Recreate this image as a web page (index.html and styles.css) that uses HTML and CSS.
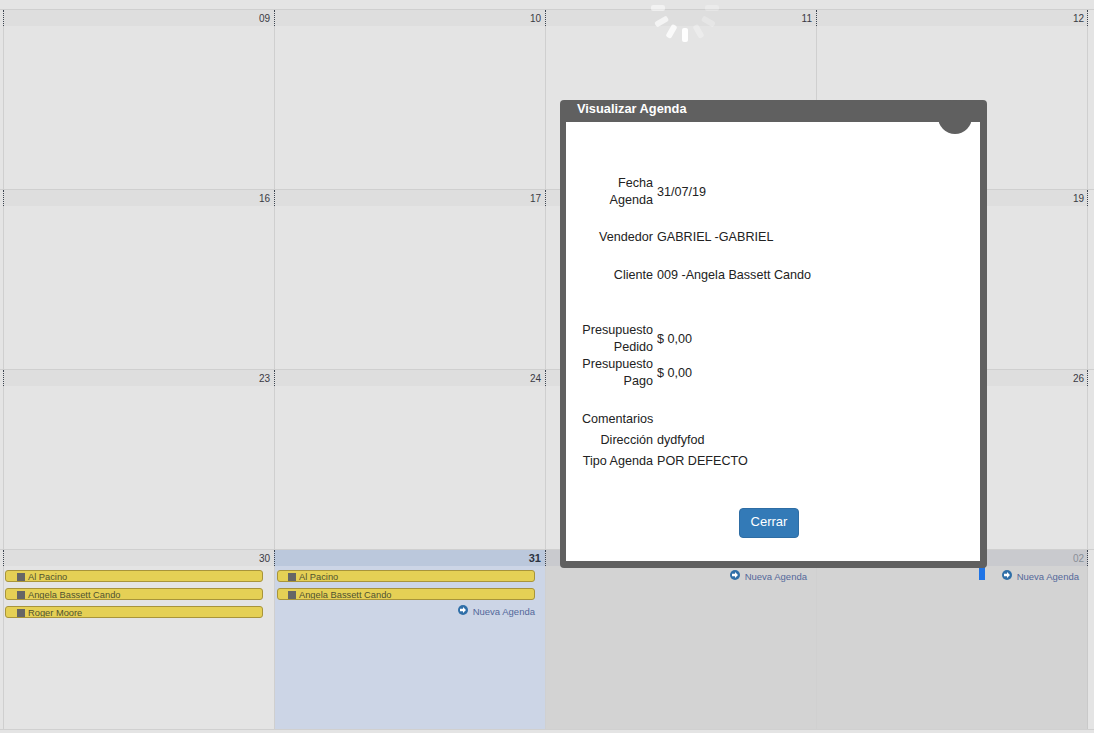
FILE: index.html
```html
<!DOCTYPE html>
<html lang="es">
<head>
<meta charset="utf-8">
<title>Visualizar Agenda</title>
<link rel="stylesheet" href="styles.css">
</head>
<body>
<main class="calendar">
  <section class="week">
    <div class="day day-first"><div class="day-head">09</div></div>
    <div class="day"><div class="day-head">10</div></div>
    <div class="day"><div class="day-head">11</div></div>
    <div class="day"><div class="day-head">12</div></div>
  </section>
  <section class="week">
    <div class="day day-first"><div class="day-head">16</div></div>
    <div class="day"><div class="day-head">17</div></div>
    <div class="day"><div class="day-head">18</div></div>
    <div class="day"><div class="day-head">19</div></div>
  </section>
  <section class="week">
    <div class="day day-first"><div class="day-head">23</div></div>
    <div class="day"><div class="day-head">24</div></div>
    <div class="day"><div class="day-head">25</div></div>
    <div class="day"><div class="day-head">26</div></div>
  </section>
  <section class="week week-last">
    <div class="day day-first">
      <div class="day-head">30</div>
      <div class="event"><span class="event-mark"></span>Al Pacino</div>
      <div class="event"><span class="event-mark"></span>Angela Bassett Cando</div>
      <div class="event"><span class="event-mark"></span>Roger Moore</div>
    </div>
    <div class="day day-today">
      <div class="day-head">31</div>
      <div class="event"><span class="event-mark"></span>Al Pacino</div>
      <div class="event"><span class="event-mark"></span>Angela Bassett Cando</div>
      <a class="new-link"><svg class="new-icon" viewBox="0 0 10 10"><circle cx="5" cy="5" r="5"/><path class="new-arrow" d="M2 3.8h3V2l3 3-3 3V6.2H2z"/></svg>Nueva Agenda</a>
    </div>
    <div class="day day-other day-c3">
      <div class="day-head">01</div>
      <a class="new-link"><svg class="new-icon" viewBox="0 0 10 10"><circle cx="5" cy="5" r="5"/><path class="new-arrow" d="M2 3.8h3V2l3 3-3 3V6.2H2z"/></svg>Nueva Agenda</a>
    </div>
    <div class="day day-other day-c4">
      <div class="day-head">02</div>
      <a class="new-link"><svg class="new-icon" viewBox="0 0 10 10"><circle cx="5" cy="5" r="5"/><path class="new-arrow" d="M2 3.8h3V2l3 3-3 3V6.2H2z"/></svg>Nueva Agenda</a>
    </div>
  </section>
</main>

<svg class="spinner" viewBox="0 0 80 80">
  <g fill="#fff">
    <rect class="s1" x="37" y="60" width="6" height="14" rx="2" transform="rotate(90 40 40)"/>
    <rect class="s2" x="37" y="60" width="6" height="14" rx="2" transform="rotate(60 40 40)"/>
    <rect class="s3" x="37" y="60" width="6" height="14" rx="2" transform="rotate(30 40 40)"/>
    <rect class="s4" x="37" y="60" width="6" height="14" rx="2"/>
    <rect class="s5" x="37" y="60" width="6" height="14" rx="2" transform="rotate(-30 40 40)"/>
    <rect class="s6" x="37" y="60" width="6" height="14" rx="2" transform="rotate(-60 40 40)"/>
    <rect class="s7" x="37" y="60" width="6" height="14" rx="2" transform="rotate(-90 40 40)"/>
  </g>
</svg>

<span class="blue-mark"></span>

<div class="modal">
  <header class="modal-head">
    <h1 class="modal-title">Visualizar Agenda</h1>
    <span class="modal-close"></span>
  </header>
  <div class="modal-body">
    <div class="field"><span class="field-label">Fecha Agenda</span><span class="field-value">31/07/19</span></div>
    <div class="field gap-20"><span class="field-label">Vendedor</span><span class="field-value">GABRIEL -GABRIEL</span></div>
    <div class="field gap-21"><span class="field-label">Cliente</span><span class="field-value">009 -Angela Bassett Cando</span></div>
    <div class="field gap-38"><span class="field-label">Presupuesto Pedido</span><span class="field-value">$ 0,00</span></div>
    <div class="field"><span class="field-label">Presupuesto Pago</span><span class="field-value">$ 0,00</span></div>
    <div class="field gap-21"><span class="field-label">Comentarios</span><span class="field-value"></span></div>
    <div class="field gap-4"><span class="field-label">Dirección</span><span class="field-value">dydfyfod</span></div>
    <div class="field gap-4"><span class="field-label">Tipo Agenda</span><span class="field-value">POR DEFECTO</span></div>
    <div class="modal-actions"><button class="btn-close" type="button">Cerrar</button></div>
  </div>
</div>
</body>
</html>
```
FILE: styles.css
```css
* { box-sizing: border-box; }

html, body {
  margin: 0;
  height: 733px;
  overflow: hidden;
}

body {
  background: #e4e4e4;
  font-family: "Liberation Sans", Arial, sans-serif;
  color: #333;
}

.calendar {
  padding-top: 9px;
}

.week {
  display: grid;
  grid-template-columns: repeat(4, 271px);
  padding-left: 3px;
  height: 180px;
  border-top: 1px solid #cfcfcf;
}

.week-last {
  height: 181px;
  border-bottom: 1px solid #d0d0d0;
}

.day {
  border-left: 1px solid #cfcfcf;
  position: relative;
  font-size: 10px;
}

.day:last-child {
  width: 272px;
  border-right: 1px solid #cfcfcf;
}

.day-head {
  height: 16px;
  margin-left: -1px;
  padding-right: 4px;
  border-left: 1px dotted #3c4450;
  background: #dedede;
  text-align: right;
  font-size: 10px;
  line-height: 17px;
  color: #3a3a44;
}

.day:last-child .day-head {
  margin-right: -1px;
  border-right: 1px dotted #3c4450;
  padding-right: 3px;
  width: 272px;
}

.day-today {
  background: #ccd5e6;
}

.day-today .day-head {
  background: #bbc8dc;
  font-weight: bold;
  font-size: 11px;
  color: #2c3340;
}

.day-other {
  background: #d3d3d3;
  border-left-color: #d0d0d0;
}

.day-other .day-head {
  background: #c9cace;
  color: #8a8f98;
}

.day-other:last-child {
  border-right-color: #c9c9c9;
}

.event {
  height: 12px;
  margin: 4px 10px 6px 2px;
  padding-left: 10px;
  border: 1px solid #a8943a;
  border-radius: 3px;
  background: #e5d055;
  color: #4f5230;
  font-size: 9.3px;
  line-height: 12px;
  overflow: hidden;
  white-space: nowrap;
}

.event + .event {
  margin-top: 0;
}

.day-first .event {
  margin-left: 1px;
  margin-right: 11px;
  padding-left: 11px;
}

.event-mark {
  display: inline-block;
  width: 8px;
  height: 8px;
  margin-right: 3px;
  background: #666;
  vertical-align: -1px;
}

.new-link {
  display: flex;
  justify-content: flex-end;
  align-items: center;
  gap: 5px;
  height: 12px;
  margin: 2px 10px 0 0;
  color: #53689a;
  font-size: 9.5px;
  line-height: 12px;
}

.day-c3 .new-link { margin: 5px 9px 0 0; }
.day-c4 .new-link { margin: 5px 8px 0 0; }

.new-icon {
  width: 10px;
  height: 10px;
  margin-top: -4px;
}

.new-icon circle { fill: #2f6fa8; }
.new-arrow { fill: #fff; }

.spinner {
  position: absolute;
  left: 645px;
  top: -32px;
  width: 80px;
  height: 80px;
}

.s1 { opacity: .5; }
.s2 { opacity: .65; }
.s3 { opacity: .8; }
.s4 { opacity: .95; }
.s5 { opacity: .3; }
.s6 { opacity: .25; }
.s7 { opacity: .25; }

.blue-mark {
  position: absolute;
  left: 979px;
  top: 567px;
  width: 6px;
  height: 13px;
  background: #1f74e6;
}

.modal {
  position: absolute;
  left: 560px;
  top: 100px;
  width: 427px;
  height: 468px;
  display: flex;
  flex-direction: column;
  background: #606060;
  border-radius: 4px;
  padding: 0 7px 7px 6px;
}

.modal-head {
  height: 22px;
  position: relative;
  flex: none;
}

.modal-title {
  margin: 0 0 0 11px;
  font-size: 12.8px;
  line-height: 17px;
  font-weight: bold;
  color: #fff;
}

.modal-close {
  position: absolute;
  left: 372px;
  top: 0;
  width: 34px;
  height: 34px;
  border-radius: 50%;
  background: #606060;
  z-index: 1;
}

.modal-body {
  flex: 1;
  background: #fff;
  padding: 53px 0 0 16px;
  font-size: 12.6px;
  line-height: 17px;
  color: #222;
}

.field {
  display: flex;
  align-items: center;
}

.field-label {
  width: 71px;
  text-align: right;
  flex: none;
}

.field-value {
  margin-left: 4px;
}

.gap-20 { margin-top: 20px; }
.gap-21 { margin-top: 21px; }
.gap-38 { margin-top: 38px; }
.gap-4 { margin-top: 4px; }

.modal-actions {
  display: flex;
  justify-content: center;
  margin: 38px 0 0 -24px;
}

.btn-close {
  width: 60px;
  height: 30px;
  padding: 0 0 3px;
  border: 1px solid #2e6da4;
  border-radius: 4px;
  background: #337ab7;
  color: #fff;
  font-family: inherit;
  font-size: 13px;
}
```
